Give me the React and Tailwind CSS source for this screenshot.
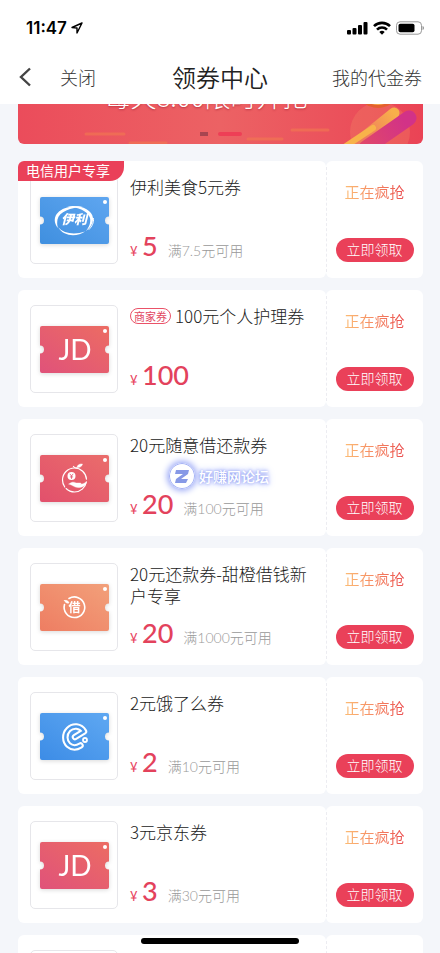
import React from "react";

const sans = "font-['Noto_Sans_CJK_SC',sans-serif]";
const latin = "font-['Lato','Noto_Sans_CJK_SC',sans-serif]";

const coupons = [
  { title: "伊利美食5元券", price: "5", rule: "满7.5元可用", logo: "yili", ribbon: "电信用户专享" },
  { title: "100元个人护理券", price: "100", logo: "jd", tag: "商家券" },
  { title: "20元随意借还款券", price: "20", rule: "满100元可用", logo: "orange" },
  { title: "20元还款券-甜橙借钱新户专享", price: "20", rule: "满1000元可用", logo: "loan" },
  { title: "2元饿了么券", price: "2", rule: "满10元可用", logo: "eleme" },
  { title: "3元京东券", price: "3", rule: "满30元可用", logo: "jd" },
];

const gradients = {
  yili: ["#3f8fdf", "#5fa6f0"],
  eleme: ["#3c8ce6", "#5fa8f2"],
  jd: ["#e0527a", "#ec6c63"],
  orange: ["#e2506c", "#ea6d6b"],
  loan: ["#ee7d62", "#f2a07a"],
};

function Logo({ kind }) {
  if (kind === "jd") {
    return (
      <text x="35" y="34" textAnchor="middle" fill="#fff" fontFamily="Lato, sans-serif" fontSize="28" fontWeight="400">
        JD
      </text>
    );
  }
  if (kind === "yili") {
    return (
      <g fill="#fff" strokeLinecap="round">
        <path d="M18 31C10 21 18 11 32 9.500c5-.5 9 0 11 .5C31 10.500 19 14.500 17.500 22.500c-.5 3-.5 5.500.5 8.500z" />
        <path d="M27 9.500c13-2 25 3 26 11.500 .5 5-3 10-7 13 3-4 5-8 4-13-2-7-12-11-23-11.500z" />
        <path d="M18 30c6 7 17 8 27 4.500-7 5-21 6-27-4.500z" />
        <path d="M49 32.500c3-3 5-7 4.500-11" fill="none" stroke="#fff" strokeWidth="1" />
        <text x="34" y="27" textAnchor="middle" fontFamily="'Noto Sans CJK SC', sans-serif" fontSize="13" fontWeight="900" fontStyle="italic">
          伊利
        </text>
      </g>
    );
  }
  if (kind === "orange") {
    return (
      <g fill="none" stroke="#fff" strokeLinecap="round">
        <circle cx="34.500" cy="25" r="12" strokeWidth="1.200" strokeDasharray="26 2 44 3.400" strokeDashoffset="-2" />
        <path d="M37 12.500c0-2.500 2.500-4 5.500-3.500-.5 2.500-2.500 3.800-5.500 3.500z" fill="#fff" strokeWidth="0.400" />
        <path d="M33.500 11.500q1 1.500 3 1.500" strokeWidth="1.200" />
        <circle cx="31.500" cy="21" r="4" fill="#fff" stroke="none" />
        <path d="M30.100 19.200l1.400 1.800 1.400-1.800M31.500 21v2.500M30.300 21.900h2.400" stroke="#e2506c" strokeWidth="0.800" />
        <path d="M29 29c2-2 5-2.500 7-1h4c1.500 0 1.500 1 0 1.300 3 .2 4.500-1.800 6.500-1.800-1 3-4 5-8 5-4 .2-6-2.500-9.500-3.500z" fill="#fff" strokeWidth="0.400" />
      </g>
    );
  }
  if (kind === "loan") {
    return (
      <g fill="none" stroke="#fff" strokeLinecap="round">
        <path d="M29 14.500a10.300 10.300 0 1 1-4.500 6" strokeWidth="1.600" />
        <path d="M24.500 16.500c2-.5 4 .5 4.500 2.500-2 .5-4-.5-4.500-2.500z" fill="#fff" strokeWidth="0.600" />
        <text x="34.500" y="28" textAnchor="middle" fill="#fff" stroke="none" fontFamily="'Noto Sans CJK SC', sans-serif" fontSize="12" fontWeight="700">
          借
        </text>
      </g>
    );
  }
  return (
    <g fill="none" strokeLinecap="round" strokeLinejoin="round">
      <path d="M35 24l9-5.500c-3.500-6-11-6.500-15.500-2-4.500 4.500-4 12 0 15.500 3.500 3 8 3 12 .5" stroke="#fff" strokeWidth="6.500" />
      <path d="M35 24l9-5.500c-3.500-6-11-6.500-15.500-2-4.500 4.500-4 12 0 15.500 3.500 3 8 3 12 .5" stroke="#4a98ea" strokeWidth="2.400" />
      <circle cx="45" cy="27" r="2" fill="#4a98ea" stroke="#fff" strokeWidth="1.800" />
    </g>
  );
}

function Ticket({ kind, id }) {
  const [from, to] = gradients[kind];
  return (
    <svg width="69" height="47" viewBox="0 0 69 47" className={`drop-shadow-sm ${sans}`} aria-hidden="true">
      <defs>
        <linearGradient id={id} x1="0" y1="1" x2="1" y2="0">
          <stop offset="0" stopColor={from} />
          <stop offset="1" stopColor={to} />
        </linearGradient>
      </defs>
      <path
        d="M2 0h65a2 2 0 0 1 2 2v17.500a4 4 0 0 0 0 8V45a2 2 0 0 1-2 2H2a2 2 0 0 1-2-2V27.500a4 4 0 0 0 0-8V2a2 2 0 0 1 2-2z"
        fill={`url(#${id})`}
      />
      <circle cx="65" cy="5" r="2" fill="#fff" />
      <Logo kind={kind} />
    </svg>
  );
}

function Panels({ thumb, details, action }) {
  return (
    <>
      <div className="flex min-w-0 flex-1 gap-3 rounded-md bg-white px-3 pt-[15px] pb-[13px]">
        <div className="flex size-[88px] shrink-0 items-center justify-center rounded-[5px] border border-[#e6e6ea]">
          {thumb}
        </div>
        {details}
      </div>
      <div className="relative z-10 my-1.5 -mr-px w-px border-l border-dashed border-[#ececf1]" />
      <div className="flex w-[97px] shrink-0 flex-col items-center justify-between rounded-md bg-white pt-5 pb-4">{action}</div>
    </>
  );
}

function Coupon({ coupon, index }) {
  const { title, price, rule, logo, ribbon, tag } = coupon;
  return (
    <li className="relative flex h-[117px] shrink-0">
      <Panels
        thumb={<Ticket kind={logo} id={`ticket-${index}`} />}
        details={
          <div className="flex min-w-0 flex-1 flex-col justify-between">
            <h2 className="text-[17px] leading-[22px] font-light text-[#222]">
              {tag && (
                <span className="mr-1 inline-block rounded-full border border-[#ea5268] px-[3px] align-[2px] text-[11px] leading-[14px] font-normal text-[#e2475f]">
                  {tag}
                </span>
              )}
              {title}
            </h2>
            <p className={`flex items-baseline leading-7 ${latin}`}>
              <span className="w-3 text-[13px] font-normal text-[#e84460]">¥</span>
              <span className="text-[27px] font-medium text-[#e3425c]">{price}</span>
              {rule && <span className="ml-2.5 text-sm font-light text-[#999]">{rule}</span>}
            </p>
          </div>
        }
        action={
          <>
            <span className="bg-linear-to-r from-[#fbbd75] to-[#ea4c50] bg-clip-text text-[15px] leading-[22px] text-transparent">
              正在疯抢
            </span>
            <button type="button" className="h-6 w-[78px] rounded-full bg-[#ea4059] pb-0.5 text-sm leading-[22px] font-light text-white">
              立即领取
            </button>
          </>
        }
      />
      {ribbon && (
        <span className="absolute top-0 left-0 rounded-tl-md rounded-br-[14px] bg-[#ea4059] pr-3.5 pb-0.5 pl-2 text-sm leading-[18px] text-white">
          {ribbon}
        </span>
      )}
      {index === 2 && <Watermark />}
    </li>
  );
}

function Watermark() {
  return (
    <div className="absolute top-11 left-[151px] flex items-center gap-1 text-sm leading-6 font-medium text-white">
      <svg width="26" height="26" viewBox="0 0 26 26" className="rounded-full shadow-[0_0_6px_2px_#9dabf7]" aria-hidden="true">
        <circle cx="13" cy="13" r="13" fill="#a3b0f5" />
        <circle cx="13" cy="13" r="12" fill="#fff" />
        <path d="M7 7h13l-1 4-7 5h7l-2 4H6l1-4 7-5H6z" fill="#8799e6" />
      </svg>
      <span className="[text-shadow:0_0_3px_#8d9cf3,0_0_5px_#9dabf7,0_0_8px_#b3bdfb]">好赚网论坛</span>
    </div>
  );
}

function StatusBar() {
  return (
    <div className="flex h-[54px] items-center justify-between pt-0.5 pr-4 pl-[26px] text-black">
      <div className="flex items-center gap-1">
        <span className="font-['Inter',sans-serif] text-[17px] leading-6 font-semibold">11:47</span>
        <svg width="12" height="12" viewBox="0 0 12 12" fill="none" stroke="currentColor" strokeWidth="1.400" strokeLinejoin="round" aria-hidden="true">
          <path d="M11 1L1 5.500l5 .5v5z" />
        </svg>
      </div>
      <div className="flex items-center gap-[5px]">
        <svg width="21" height="14" viewBox="0 0 21 14" fill="currentColor" aria-hidden="true">
          <rect x="0" y="9" width="4" height="4.500" rx="1" />
          <rect x="5.500" y="7" width="4" height="6.500" rx="1" />
          <rect x="11" y="4" width="4" height="9.500" rx="1" />
          <rect x="16.500" y="1" width="4" height="12.500" rx="1" />
        </svg>
        <svg width="18" height="14" viewBox="0 0 18 14" fill="none" stroke="currentColor" strokeWidth="2.600" aria-hidden="true">
          <path d="M1 5.200a11.300 11.300 0 0 1 16 0" />
          <path d="M4 8.600a7 7 0 0 1 10 0" />
          <path d="M6.300 11a3.800 3.800 0 0 1 5.400 0L9 13.800z" fill="currentColor" stroke="none" />
        </svg>
        <svg width="28" height="14" viewBox="0 0 28 14" fill="none" aria-hidden="true">
          <rect x="0.500" y="0.800" width="25" height="12.400" rx="3.500" stroke="#999" />
          <rect x="2.500" y="2.800" width="16" height="8.400" rx="1.800" fill="#000" />
          <path d="M26.500 5v4c1-.4 1.500-1.100 1.500-2s-.5-1.600-1.500-2z" fill="#999" />
        </svg>
      </div>
    </div>
  );
}

function Banner() {
  return (
    <div className="relative -mt-20 h-30 shrink-0 overflow-hidden rounded-md bg-linear-to-r from-[#eb4c5b] via-[#ec6264] to-[#ea4355]">
      <svg className="absolute inset-0 size-full" viewBox="0 0 405 120" preserveAspectRatio="xMaxYMax slice" fill="none" aria-hidden="true">
        <defs>
          <linearGradient id="streak" gradientUnits="userSpaceOnUse" x1="345" y1="112" x2="375" y2="88">
            <stop offset="0" stopColor="#ee7a5e" />
            <stop offset="1" stopColor="#f8b04a" />
          </linearGradient>
          <linearGradient id="pink" gradientUnits="userSpaceOnUse" x1="345" y1="120" x2="385" y2="95">
            <stop offset="0" stopColor="#e0476a" />
            <stop offset="1" stopColor="#d23287" />
          </linearGradient>
        </defs>
        <circle cx="362" cy="108" r="30" fill="#f18a66" opacity="0.300" />
        <path d="M335 122L376 89" stroke="url(#streak)" strokeWidth="11" strokeLinecap="round" />
        <path d="M325 124L355 104" stroke="#f8b34a" strokeWidth="6" strokeLinecap="round" />
        <path d="M348 124L391 94" stroke="url(#pink)" strokeWidth="15" strokeLinecap="round" />
        <circle cx="360" cy="62" r="22" fill="#e4602f" />
        <circle cx="360" cy="61" r="20" fill="#f2a94c" />
        <path d="M68 110h38M274 106h36M230 115h34M112 119h36" stroke="#f27a50" strokeWidth="3" strokeLinecap="round" opacity="0.600" />
      </svg>
      <p className="relative pt-[54px] pr-7 text-center text-[26px] leading-9 font-light text-white [text-shadow:0_1px_2px_#b5313f]">每天8:00限时开抢</p>
      <div className="absolute inset-x-0 bottom-2 flex justify-center gap-2.5">
        <span className="h-1 w-2 bg-[#a84550]" />
        <span className="h-1 w-6 rounded-full bg-[#ee3f56]" />
      </div>
    </div>
  );
}

export default function App() {
  return (
    <div className={`relative flex h-screen flex-col overflow-hidden bg-[#f4f6fa] ${sans}`}>
      <header className="relative z-10 shrink-0 bg-white">
        <StatusBar />
        <nav className="relative flex h-[50px] items-center justify-between px-[18px] pb-1 text-lg font-light text-[#333]">
          <div className="flex items-center gap-7">
            <button type="button" aria-label="返回">
              <svg width="14" height="20" viewBox="0 0 14 20" fill="none" stroke="#444" strokeWidth="2.400" aria-hidden="true">
                <path d="M12 1.500L3 10l9 8.500" />
              </svg>
            </button>
            <button type="button">关闭</button>
          </div>
          <h1 className="pointer-events-none absolute inset-x-0 text-center text-2xl leading-8 font-[350] text-[#222]">领券中心</h1>
          <a href="#vouchers">我的代金券</a>
        </nav>
      </header>
      <main className="flex min-h-0 flex-1 flex-col overflow-hidden pr-[17px] pl-[18px]">
        <Banner />
        <ul className="mt-[17px] flex flex-col gap-3">
          {coupons.map((coupon, index) => (
            <Coupon key={index} coupon={coupon} index={index} />
          ))}
          <li className="flex h-[117px] shrink-0" aria-hidden="true">
            <Panels details={<div className="flex-1" />} />
          </li>
        </ul>
      </main>
      <div className="absolute inset-x-0 bottom-[9px] z-20 mx-auto h-1.5 w-[158px] rounded-full bg-black" />
    </div>
  );
}
